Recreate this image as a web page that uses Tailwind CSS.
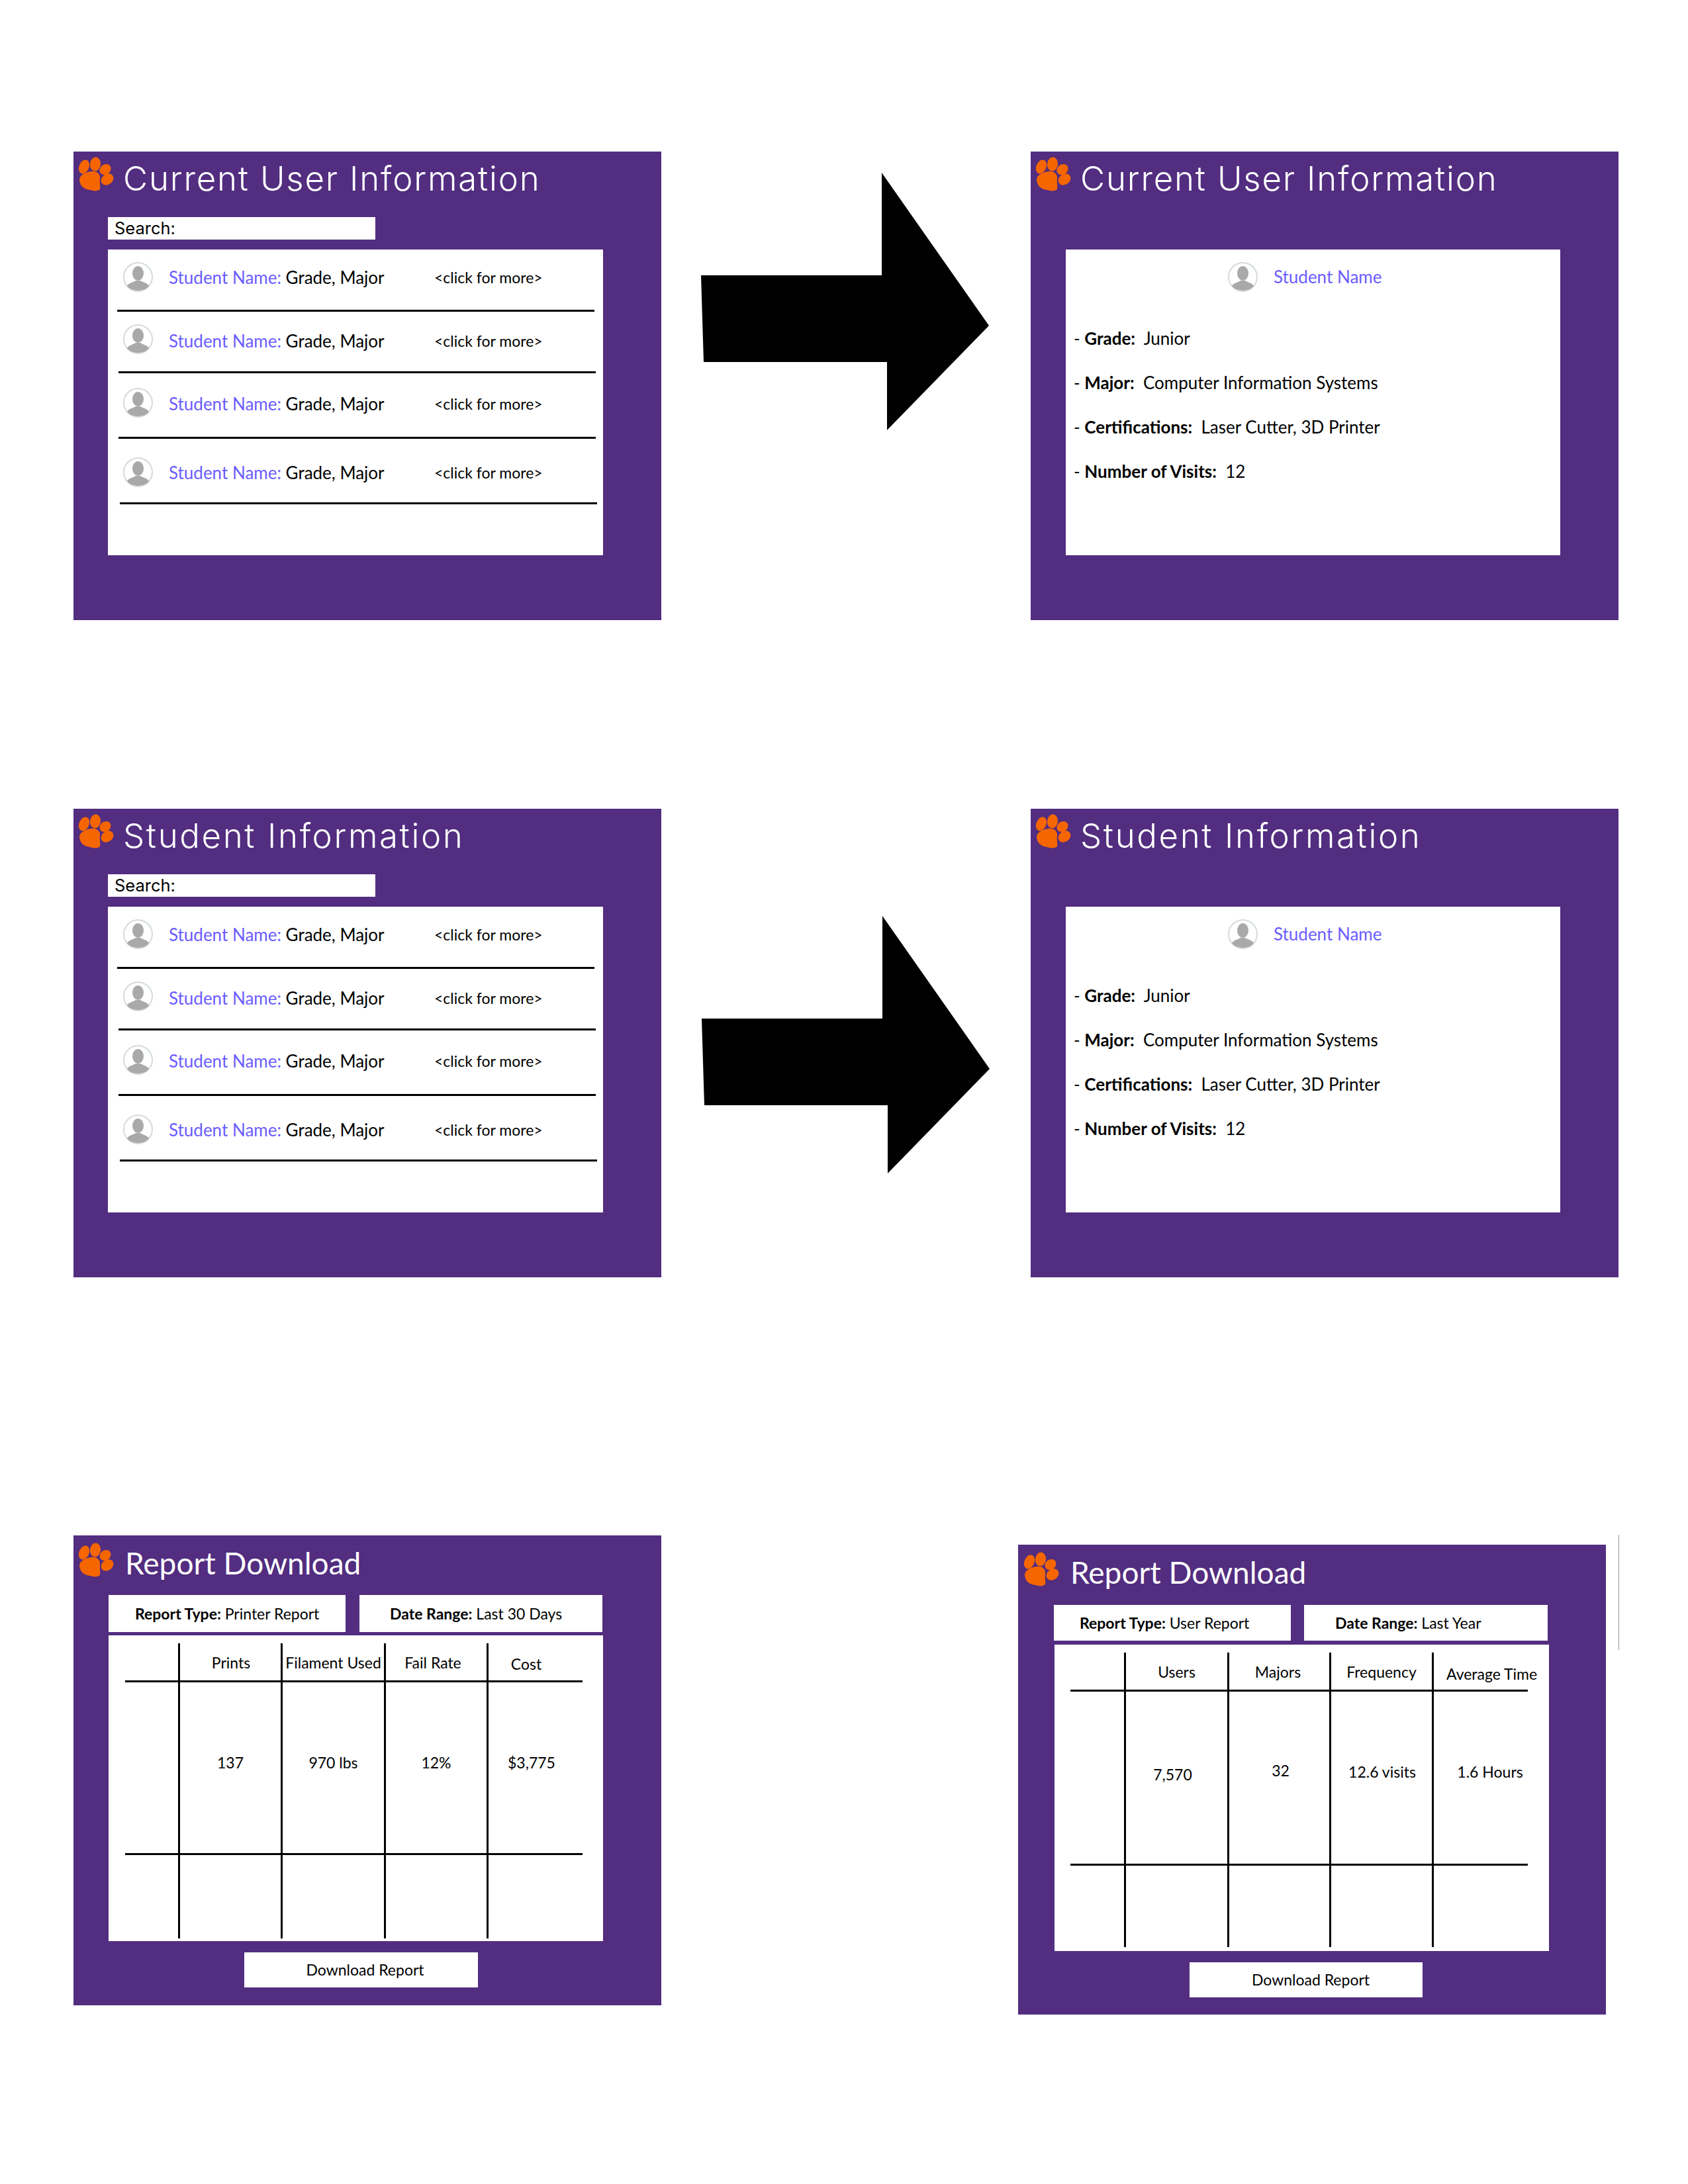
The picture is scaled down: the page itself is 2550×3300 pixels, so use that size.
<!DOCTYPE html>
<html lang="en">
	<head>
		<meta charset="UTF-8" />
		<script src="https://cdn.jsdelivr.net/npm/@tailwindcss/browser@4"></script>
		<title>Makerspace Wireframes</title>
	</head>

	<body class="bg-white font-['Lato',sans-serif] text-black">
		<svg class="hidden">
			<symbol id="paw" viewBox="0 0 54 52">
				<ellipse cx="9" cy="15" rx="7.5" ry="11" transform="rotate(22 9 15)" />
				<ellipse cx="26" cy="11" rx="8" ry="10.5" transform="rotate(8 26 11)" />
				<ellipse cx="41" cy="19" rx="9" ry="7.5" transform="rotate(-35 41 19)" />
				<ellipse cx="44" cy="34" rx="10" ry="8" transform="rotate(-35 44 34)" />
				<path d="M2 35 C2 27 12 23 20 22 C28 21 34 26 33 33 C32 38 34 44 33 49 C30 52 24 52 18 50 C10 49 3 45 2 35 Z" />
			</symbol>
			<symbol id="avatar" viewBox="0 0 45 45">
				<circle cx="22.5" cy="22.5" r="21.5" fill="#fff" stroke="#d4dcd9" stroke-width="2" />
				<ellipse cx="22.5" cy="17" rx="8.5" ry="11" fill="#a9a9a9" />
				<path d="M6 36 C9 31 15 31 19 28 L26 28 C30 31 36 31 39 36 C35 41 29 43 22.5 43 C16 43 10 41 6 36 Z" fill="#a9a9a9" />
			</symbol>
		</svg>

		<div class="relative w-[2550px] h-[3300px] overflow-hidden">
			<!-- current user list -->
			<section class="absolute left-[111px] top-[229px] w-[888px] h-[708px] bg-[#522d80] pl-[52px]">
				<svg class="absolute left-[7px] top-[8px] w-[54px] h-[52px] fill-[#f56600]"><use href="#paw" /></svg>
				<h1 class="pl-[23px] pt-[9px] h-[99px] font-['Inter',sans-serif] font-light text-[51px] tracking-[1.8px] leading-[64px] text-white whitespace-nowrap">Current User Information</h1>
				<div class="w-[404px] h-[34px] bg-white pl-[10px] font-['Inter',sans-serif] text-[25.5px] leading-[34px]">Search:</div>
				<div class="mt-[15px] w-[748px] h-[462px] bg-white">
					<div class="h-[91px] pt-[19px] pl-[23px] flex items-start">
						<svg class="w-[45px] h-[45px]"><use href="#avatar" /></svg>
						<p class="ml-[24px] pt-[1px] w-[401px] h-[45px] text-[26px] leading-[45px]"><span class="text-[#6b5cff]">Student Name:</span> Grade, Major</p>
						<p class="pt-[1px] h-[45px] text-[23px] leading-[45px]">&lt;click for more&gt;</p>
					</div>
					<div class="ml-[14px] w-[721px] h-[3px] bg-black"></div>
					<div class="h-[90px] pt-[19px] pl-[23px] flex items-start">
						<svg class="w-[45px] h-[45px]"><use href="#avatar" /></svg>
						<p class="ml-[24px] pt-[3px] w-[401px] h-[45px] text-[26px] leading-[45px]"><span class="text-[#6b5cff]">Student Name:</span> Grade, Major</p>
						<p class="pt-[3px] h-[45px] text-[23px] leading-[45px]">&lt;click for more&gt;</p>
					</div>
					<div class="ml-[16px] w-[721px] h-[3px] bg-black"></div>
					<div class="h-[96px] pt-[22px] pl-[23px] flex items-start">
						<svg class="w-[45px] h-[45px]"><use href="#avatar" /></svg>
						<p class="ml-[24px] pt-[2px] w-[401px] h-[45px] text-[26px] leading-[45px]"><span class="text-[#6b5cff]">Student Name:</span> Grade, Major</p>
						<p class="pt-[2px] h-[45px] text-[23px] leading-[45px]">&lt;click for more&gt;</p>
					</div>
					<div class="ml-[16px] w-[721px] h-[3px] bg-black"></div>
					<div class="h-[96px] pt-[28px] pl-[23px] flex items-start">
						<svg class="w-[45px] h-[45px]"><use href="#avatar" /></svg>
						<p class="ml-[24px] pt-[1px] w-[401px] h-[45px] text-[26px] leading-[45px]"><span class="text-[#6b5cff]">Student Name:</span> Grade, Major</p>
						<p class="pt-[1px] h-[45px] text-[23px] leading-[45px]">&lt;click for more&gt;</p>
					</div>
					<div class="ml-[18px] w-[721px] h-[3px] bg-black"></div>
				</div>
			</section>

			<svg class="absolute left-[1055px] top-[255px] w-[445px] h-[405px]" viewBox="0 0 445 405"><polygon points="4,161 277,161 277,6 439,237 285,395 285,292 8,292" /></svg>

			<!-- current user detail -->
			<section class="absolute left-[1557px] top-[229px] w-[888px] h-[708px] bg-[#522d80] pl-[53px]">
				<svg class="absolute left-[7px] top-[8px] w-[54px] h-[52px] fill-[#f56600]"><use href="#paw" /></svg>
				<h1 class="pl-[22px] pt-[9px] h-[148px] font-['Inter',sans-serif] font-light text-[51px] tracking-[1.8px] leading-[64px] text-white whitespace-nowrap">Current User Information</h1>
				<div class="w-[747px] h-[462px] bg-white text-[26px] leading-[36px]">
					<div class="pt-[19px] pl-[245px] h-[116px] flex items-start">
						<svg class="w-[45px] h-[45px]"><use href="#avatar" /></svg>
						<p class="ml-[24px] h-[45px] text-[26px] leading-[45px] text-[#6b5cff]">Student Name</p>
					</div>
					<div class="pl-[12px] flex flex-col gap-[31px]">
						<p>- <b>Grade:</b>&nbsp; Junior</p>
						<p>- <b>Major:</b>&nbsp; Computer Information Systems</p>
						<p>- <b>Certifications:</b>&nbsp; Laser Cutter, 3D Printer</p>
						<p>- <b>Number of Visits:</b>&nbsp; 12</p>
					</div>
				</div>
			</section>

			<!-- student list -->
			<section class="absolute left-[111px] top-[1222px] w-[888px] h-[708px] bg-[#522d80] pl-[52px]">
				<svg class="absolute left-[7px] top-[8px] w-[54px] h-[52px] fill-[#f56600]"><use href="#paw" /></svg>
				<h1 class="pl-[23px] pt-[9px] h-[99px] font-['Inter',sans-serif] font-light text-[51px] tracking-[2.6px] leading-[64px] text-white whitespace-nowrap">Student Information</h1>
				<div class="w-[404px] h-[34px] bg-white pl-[10px] font-['Inter',sans-serif] text-[25.5px] leading-[34px]">Search:</div>
				<div class="mt-[15px] w-[748px] h-[462px] bg-white">
					<div class="h-[91px] pt-[19px] pl-[23px] flex items-start">
						<svg class="w-[45px] h-[45px]"><use href="#avatar" /></svg>
						<p class="ml-[24px] pt-[1px] w-[401px] h-[45px] text-[26px] leading-[45px]"><span class="text-[#6b5cff]">Student Name:</span> Grade, Major</p>
						<p class="pt-[1px] h-[45px] text-[23px] leading-[45px]">&lt;click for more&gt;</p>
					</div>
					<div class="ml-[14px] w-[721px] h-[3px] bg-black"></div>
					<div class="h-[90px] pt-[19px] pl-[23px] flex items-start">
						<svg class="w-[45px] h-[45px]"><use href="#avatar" /></svg>
						<p class="ml-[24px] pt-[3px] w-[401px] h-[45px] text-[26px] leading-[45px]"><span class="text-[#6b5cff]">Student Name:</span> Grade, Major</p>
						<p class="pt-[3px] h-[45px] text-[23px] leading-[45px]">&lt;click for more&gt;</p>
					</div>
					<div class="ml-[16px] w-[721px] h-[3px] bg-black"></div>
					<div class="h-[96px] pt-[22px] pl-[23px] flex items-start">
						<svg class="w-[45px] h-[45px]"><use href="#avatar" /></svg>
						<p class="ml-[24px] pt-[2px] w-[401px] h-[45px] text-[26px] leading-[45px]"><span class="text-[#6b5cff]">Student Name:</span> Grade, Major</p>
						<p class="pt-[2px] h-[45px] text-[23px] leading-[45px]">&lt;click for more&gt;</p>
					</div>
					<div class="ml-[16px] w-[721px] h-[3px] bg-black"></div>
					<div class="h-[96px] pt-[28px] pl-[23px] flex items-start">
						<svg class="w-[45px] h-[45px]"><use href="#avatar" /></svg>
						<p class="ml-[24px] pt-[1px] w-[401px] h-[45px] text-[26px] leading-[45px]"><span class="text-[#6b5cff]">Student Name:</span> Grade, Major</p>
						<p class="pt-[1px] h-[45px] text-[23px] leading-[45px]">&lt;click for more&gt;</p>
					</div>
					<div class="ml-[18px] w-[721px] h-[3px] bg-black"></div>
				</div>
			</section>

			<svg class="absolute left-[1056px] top-[1378px] w-[445px] h-[405px]" viewBox="0 0 445 405"><polygon points="4,161 277,161 277,6 439,237 285,395 285,292 8,292" /></svg>

			<!-- student detail -->
			<section class="absolute left-[1557px] top-[1222px] w-[888px] h-[708px] bg-[#522d80] pl-[53px]">
				<svg class="absolute left-[7px] top-[8px] w-[54px] h-[52px] fill-[#f56600]"><use href="#paw" /></svg>
				<h1 class="pl-[22px] pt-[9px] h-[148px] font-['Inter',sans-serif] font-light text-[51px] tracking-[2.6px] leading-[64px] text-white whitespace-nowrap">Student Information</h1>
				<div class="w-[747px] h-[462px] bg-white text-[26px] leading-[36px]">
					<div class="pt-[19px] pl-[245px] h-[116px] flex items-start">
						<svg class="w-[45px] h-[45px]"><use href="#avatar" /></svg>
						<p class="ml-[24px] h-[45px] text-[26px] leading-[45px] text-[#6b5cff]">Student Name</p>
					</div>
					<div class="pl-[12px] flex flex-col gap-[31px]">
						<p>- <b>Grade:</b>&nbsp; Junior</p>
						<p>- <b>Major:</b>&nbsp; Computer Information Systems</p>
						<p>- <b>Certifications:</b>&nbsp; Laser Cutter, 3D Printer</p>
						<p>- <b>Number of Visits:</b>&nbsp; 12</p>
					</div>
				</div>
			</section>

			<!-- printer report -->
			<section class="absolute left-[111px] top-[2320px] w-[888px] h-[710px] bg-[#522d80] pl-[53px] text-[23px]">
				<svg class="absolute left-[7px] top-[11px] w-[54px] h-[52px] fill-[#f56600]"><use href="#paw" /></svg>
				<h1 class="pl-[25px] pt-[12px] h-[90px] text-[46px] leading-[60px] text-white">Report Download</h1>
				<div class="flex gap-[21px] h-[56px] leading-[56px] text-[23px]">
					<div class="w-[358px] pl-[40px] bg-white"><b>Report Type:</b> Printer Report</div>
					<div class="w-[367px] pl-[46px] bg-white"><b>Date Range:</b> Last 30 Days</div>
				</div>
				<div class="mt-[5px] w-[747px] h-[462px] bg-white pt-[12px] pl-[25px]">
					<div class="grid grid-cols-[80px_155px_156px_155px_145px] grid-rows-[59px_261px_126px] text-center">
						<div class="border-b-[3px] border-black"></div>
						<div class="border-b-[3px] border-l-[3px] border-black pt-[12px] pl-[2px]">Prints</div>
						<div class="border-b-[3px] border-l-[3px] border-black pt-[12px] whitespace-nowrap">Filament Used</div>
						<div class="border-b-[3px] border-l-[3px] border-black pt-[12px] pr-[10px]">Fail Rate</div>
						<div class="border-b-[3px] border-l-[3px] border-black pt-[14px] pr-[28px]">Cost</div>
						<div class="border-b-[3px] border-black"></div>
						<div class="border-b-[3px] border-l-[3px] border-black pt-[104px]">137</div>
						<div class="border-b-[3px] border-l-[3px] border-black pt-[104px]">970 lbs</div>
						<div class="border-b-[3px] border-l-[3px] border-black pt-[104px]">12%</div>
						<div class="border-b-[3px] border-l-[3px] border-black pt-[104px] pr-[12px]">$3,775</div>
						<div></div>
						<div class="border-l-[3px] border-black"></div>
						<div class="border-l-[3px] border-black"></div>
						<div class="border-l-[3px] border-black"></div>
						<div class="border-l-[3px] border-black"></div>
					</div>
				</div>
				<div class="mt-[17px] ml-[205px] pl-[12px] w-[353px] h-[53px] bg-white text-center leading-[53px]">Download Report</div>
			</section>

			<!-- user report -->
			<section class="absolute left-[1538px] top-[2334px] w-[888px] h-[710px] bg-[#522d80] pl-[54px] text-[23px]">
				<svg class="absolute left-[8px] top-[11px] w-[54px] h-[52px] fill-[#f56600]"><use href="#paw" /></svg>
				<h1 class="pl-[25px] pt-[12px] h-[91px] text-[46px] leading-[60px] text-white">Report Download</h1>
				<div class="flex gap-[20px] h-[54px] leading-[54px] text-[23px]">
					<div class="w-[358px] pl-[39px] bg-white"><b>Report Type:</b> User Report</div>
					<div class="w-[368px] pl-[47px] bg-white"><b>Date Range:</b> Last Year</div>
				</div>
				<div class="mt-[6px] ml-[1px] w-[747px] h-[463px] bg-white pt-[12px] pl-[24px]">
					<div class="grid grid-cols-[81px_156px_154px_155px_145px] grid-rows-[59px_263px_123px] text-center">
						<div class="border-b-[3px] border-black"></div>
						<div class="border-b-[3px] border-l-[3px] border-black pt-[12px]">Users</div>
						<div class="border-b-[3px] border-l-[3px] border-black pt-[12px] pr-[4px]">Majors</div>
						<div class="border-b-[3px] border-l-[3px] border-black pt-[12px]">Frequency</div>
						<div class="border-b-[3px] border-l-[3px] border-black pt-[15px] pl-[19px] whitespace-nowrap">Average Time</div>
						<div class="border-b-[3px] border-black"></div>
						<div class="border-b-[3px] border-l-[3px] border-black pt-[108px] pr-[12px]">7,570</div>
						<div class="border-b-[3px] border-l-[3px] border-black pt-[102px] pl-[4px]">32</div>
						<div class="border-b-[3px] border-l-[3px] border-black pt-[104px] pl-[2px]">12.6 visits</div>
						<div class="border-b-[3px] border-l-[3px] border-black pt-[104px] pl-[28px] whitespace-nowrap">1.6 Hours</div>
						<div></div>
						<div class="border-l-[3px] border-black"></div>
						<div class="border-l-[3px] border-black"></div>
						<div class="border-l-[3px] border-black"></div>
						<div class="border-l-[3px] border-black"></div>
					</div>
				</div>
				<div class="mt-[17px] ml-[205px] pl-[14px] w-[352px] h-[53px] bg-white text-center leading-[53px]">Download Report</div>
			</section>

			<div class="absolute left-[2445px] top-[2319px] w-px h-[174px] bg-[#999999]"></div>
		</div>
	</body>
</html>
